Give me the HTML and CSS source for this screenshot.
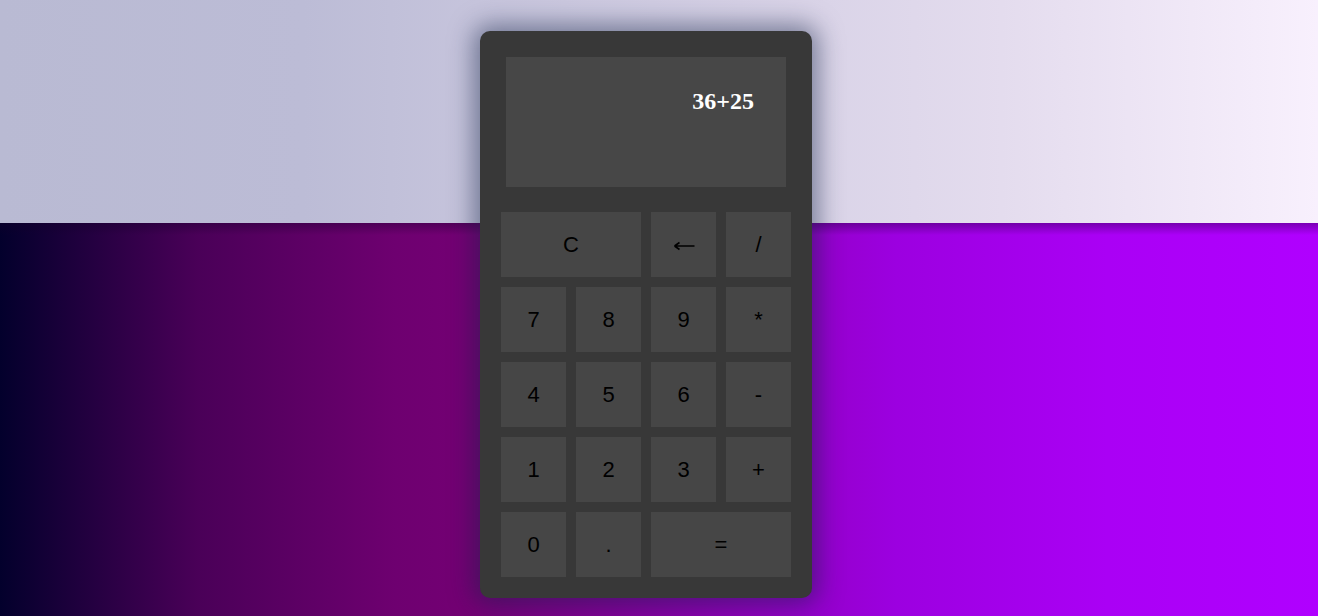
FILE: index.html
```html
<!DOCTYPE html>
<html>
<head>
<meta charset="utf-8">
<title>Calculator</title>
<link rel="stylesheet" href="styles.css">
</head>
<body>
<div class="calculator">
  <div class="display">36+25</div>
  <div class="keys">
    <div class="key wide">C</div>
    <div class="key arrow" aria-label="backspace"><svg class="arrow-icon" width="22" height="10" viewBox="0 0 22 10"><path d="M1.5 5 H21.5 M1.5 5 L6.5 1.5 M1.5 5 L6.5 8.5" fill="none" stroke="#000" stroke-width="1.6" stroke-linecap="butt"/></svg></div>
    <div class="key">/</div>
    <div class="key">7</div>
    <div class="key">8</div>
    <div class="key">9</div>
    <div class="key">*</div>
    <div class="key">4</div>
    <div class="key">5</div>
    <div class="key">6</div>
    <div class="key">-</div>
    <div class="key">1</div>
    <div class="key">2</div>
    <div class="key">3</div>
    <div class="key">+</div>
    <div class="key">0</div>
    <div class="key">.</div>
    <div class="key wide">=</div>
  </div>
</div>
</body>
</html>
```
FILE: styles.css
```css
html, body {
  margin: 0;
  padding: 0;
  height: 616px;
  overflow: hidden;
}
body {
  background:
    linear-gradient(to right, #b9bad3 0%, #bcbcd6 23%, #e4dcee 76%, #f8f0fd 100%) 0 0 / 100% 223px no-repeat,
    linear-gradient(to bottom, rgba(20, 0, 40, 0.35), rgba(20, 0, 40, 0)) 0 223px / 100% 12px no-repeat,
    linear-gradient(to right, #03002c 0%, #4a0058 15%, #6e0070 30%, #740074 36%, #9c00e0 68%, #aa00f5 84%, #b000ff 100%);
  font-family: "Liberation Sans", Arial, sans-serif;
  display: flex;
  align-items: flex-start;
}
.calculator {
  margin: 31px 0 0 480px;
  width: 332px;
  height: 567px;
  box-sizing: border-box;
  background: #383838;
  border-radius: 10px;
  box-shadow: 0 0 24px 6px rgba(20, 35, 70, 0.5);
  padding: 26px 21px 21px;
  display: flex;
  flex-direction: column;
  align-items: center;
}
.display {
  width: 280px;
  height: 130px;
  box-sizing: border-box;
  background: #474747;
  color: #ffffff;
  font-family: "Liberation Serif", "Times New Roman", serif;
  font-weight: bold;
  font-size: 24px;
  text-align: right;
  padding: 31px 32px 0 0;
}
.keys {
  margin-top: 25px;
  display: grid;
  grid-template-columns: repeat(4, 65px);
  grid-auto-rows: 65px;
  gap: 10px;
}
.key {
  background: #464646;
  color: #000000;
  font-size: 22px;
  display: flex;
  align-items: center;
  justify-content: center;
}
.key.wide {
  grid-column: span 2;
}
.key.arrow {
  padding-top: 3px;
}
.arrow-icon {
  display: block;
}
```
